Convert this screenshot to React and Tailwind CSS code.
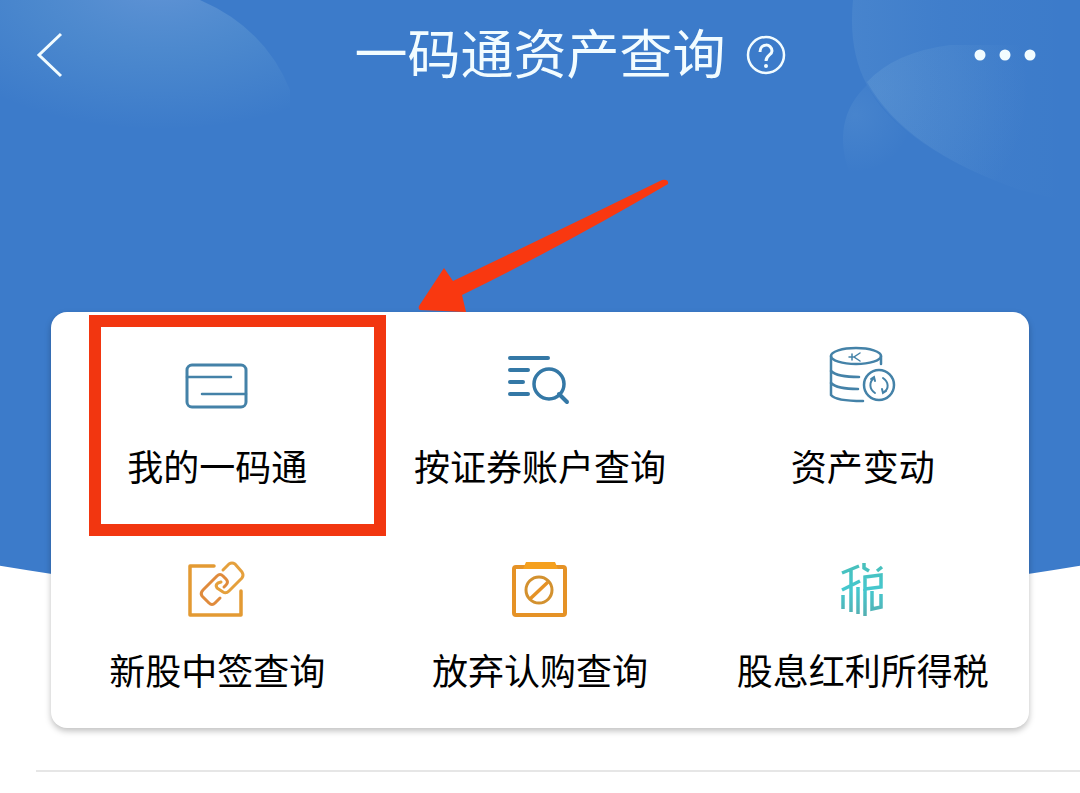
const BLUE = "#3478a6";

function CardIcon() {
  return (
    <svg viewBox="0 0 80 80" className="w-20 h-20" fill="none" stroke="#4482a8" strokeWidth="3" aria-hidden="true">
      <rect x="10" y="20" width="59" height="42" rx="5" />
      <path d="M10 32H54M25 49H69" strokeLinecap="round" strokeWidth="2.5" />
    </svg>
  );
}

function ListSearchIcon() {
  return (
    <svg viewBox="0 0 80 80" className="w-20 h-20" fill="none" stroke={BLUE} strokeWidth="4" aria-hidden="true">
      <path d="M10 13H48M10 25H28M10 37H23M10 49H28" strokeLinecap="round" />
      <circle cx="49" cy="39" r="15" strokeWidth="3.5" />
      <path d="M59 49L67 57" strokeLinecap="round" />
    </svg>
  );
}

function CoinsIcon() {
  return (
    <svg viewBox="0 0 80 80" className="w-20 h-20" fill="none" stroke="#4482a8" strokeWidth="2.5" strokeLinecap="round" aria-hidden="true">
      <ellipse cx="33" cy="11" rx="25" ry="8" />
      <path d="M8 11V50C11 54 24 56 40 56M58 11V19" />
      <path d="M8 26C12 30 22 32 36 32M8 38C12 42 22 44 35 44" />
      <path d="M26 12H32M29 9V15M37 8L31 12L37 16" strokeWidth="1.5" />
      <circle cx="56" cy="40" r="15" />
      <path d="M51 33C46 37 46 44 52 48M60 33C66 37 66 44 61 47" strokeWidth="2" />
      <path d="M48 34L51 32L52 36M63 46L60 48L59 44" strokeWidth="2" />
    </svg>
  );
}

function LinkIcon() {
  return (
    <svg viewBox="0 0 80 80" className="w-20 h-20" fill="none" strokeWidth="3.5" strokeLinecap="round" strokeLinejoin="round" aria-hidden="true">
      <path d="M37 17H13V66H64V42" stroke="#e39a33" />
      <g strokeWidth="3">
        <path d="M46 21L52 15Q55 13 58 15L65 23Q67 26 65 29L52 42Q49 45 46 43L40 39Q38 36 41 34L44 33" stroke="#e5a03c" />
        <path d="M43 49L38 54Q35 57 32 54L25 47Q23 44 26 41L40 27Q43 24 46 27L49 30Q52 33 49 36L47 38" stroke="#e08b3c" />
      </g>
    </svg>
  );
}

function ForbidIcon() {
  return (
    <svg viewBox="0 0 80 80" className="w-20 h-20" fill="none" stroke="#e59226" strokeWidth="4" aria-hidden="true">
      <rect x="14" y="18" width="51" height="48" rx="2" />
      <path d="M26 13H55L58 20H23Z" fill="#f5a01e" stroke="none" />
      <circle cx="39" cy="41" r="13" strokeWidth="3" stroke="#d3912f" />
      <path d="M30 50L48 33" strokeWidth="3.5" />
    </svg>
  );
}

function TaxIcon() {
  return (
    <svg viewBox="0 0 80 80" className="w-20 h-20" fill="none" stroke="url(#tax)" strokeWidth="3.5" aria-hidden="true">
      <defs>
        <linearGradient id="tax" gradientUnits="userSpaceOnUse" x1="0" y1="14" x2="0" y2="68">
          <stop offset="0" stopColor="#48bfba" />
          <stop offset="0.5" stopColor="#45c8cf" />
          <stop offset="1" stopColor="#55aeb0" />
        </linearGradient>
      </defs>
      <path d="M19 24L36 17M19 41L37 32M28 21V63" />
      <path d="M20 46V60M35 38V65M41 14V19L46 22M59 18L54 22" />
      <path d="M42 28L58 26V38L42 40Z" />
      <path d="M42 40V67M49 42V60L58 58V45" />
    </svg>
  );
}

const items = [
  { label: "我的一码通", Icon: CardIcon },
  { label: "按证券账户查询", Icon: ListSearchIcon },
  { label: "资产变动", Icon: CoinsIcon },
  { label: "新股中签查询", Icon: LinkIcon },
  { label: "放弃认购查询", Icon: ForbidIcon },
  { label: "股息红利所得税", Icon: TaxIcon },
];

// blue backdrop with a curved lower edge and soft bubbles in the corners
function Backdrop() {
  return (
    <div className="absolute inset-x-0 top-0 h-[609px] bg-[#3c7bca] [clip-path:ellipse(135%_609px_at_50%_0)]">
      <svg viewBox="0 0 300 200" className="absolute left-0 top-0 w-[300px] h-[200px]" aria-hidden="true">
        <defs>
          <radialGradient id="bubbleLeft" gradientUnits="userSpaceOnUse" cx="0" cy="0" r="1" gradientTransform="translate(160 -20) scale(260 150)">
            <stop offset="0" stopColor="#e6ebff" stopOpacity="0.22" />
            <stop offset="0.5" stopColor="#b4e1e6" stopOpacity="0.13" />
            <stop offset="1" stopColor="#b4e1e6" stopOpacity="0" />
          </radialGradient>
        </defs>
        <path d="M0 0H200Q265 28 290 90V200H0Z" fill="url(#bubbleLeft)" />
      </svg>
      <svg viewBox="0 0 260 220" className="absolute right-0 top-0 w-[260px] h-[220px]" aria-hidden="true">
        <defs>
          <linearGradient id="bubbleTop" gradientUnits="userSpaceOnUse" x1="30" y1="0" x2="250" y2="0">
            <stop offset="0" stopColor="#c8ebf0" stopOpacity="0.08" />
            <stop offset="0.4" stopColor="#c8ebf0" stopOpacity="0.03" />
            <stop offset="1" stopColor="#c8ebf0" stopOpacity="0" />
          </linearGradient>
          <radialGradient id="bubbleMid" gradientUnits="userSpaceOnUse" cx="60" cy="90" r="150">
            <stop offset="0" stopColor="#c8ebf0" stopOpacity="0.1" />
            <stop offset="0.5" stopColor="#c8ebf0" stopOpacity="0.06" />
            <stop offset="1" stopColor="#c8ebf0" stopOpacity="0" />
          </radialGradient>
          <radialGradient id="bubbleLow" gradientUnits="userSpaceOnUse" cx="35" cy="115" r="58">
            <stop offset="0" stopColor="#c8ebf0" stopOpacity="0.08" />
            <stop offset="1" stopColor="#c8ebf0" stopOpacity="0" />
          </radialGradient>
        </defs>
        <path d="M33 0Q28 50 47 85Q85 150 200 190L260 205V0Z" fill="url(#bubbleTop)" />
        <path d="M47 82Q75 52 130 45L260 45V205L200 190Q85 150 47 82Z" fill="url(#bubbleMid)" />
        <path d="M47 85Q10 120 30 175H100V142Q62 115 47 85Z" fill="url(#bubbleLow)" />
      </svg>
    </div>
  );
}

export default function App() {
  return (
    <div className="relative min-h-screen overflow-hidden bg-white font-['Noto_Sans_CJK_SC',sans-serif]">
      <Backdrop />

      <header className="relative grid grid-cols-[1fr_auto_1fr] items-center h-[110px] pl-9 pr-11 text-[#f2fcff]">
        <button type="button" aria-label="返回" className="justify-self-start">
          <svg viewBox="0 0 28 46" className="w-7 h-[46px]" fill="none" stroke="currentColor" strokeWidth="3">
            <path d="M25 2L3 23L25 44" />
          </svg>
        </button>
        <h1 className="pl-2 pb-2 text-[53px] leading-[72px] font-normal whitespace-nowrap">一码通资产查询</h1>
        <div className="flex items-center justify-between pl-5">
          <button type="button" aria-label="帮助">
            <svg viewBox="0 0 40 40" className="w-10 h-10" fill="none" stroke="currentColor" strokeWidth="2.5">
              <circle cx="20" cy="20" r="18" />
              <path d="M14 17C14 8 26 8 26 16C26 20 20 20 20 26" strokeWidth="3" />
              <circle cx="20" cy="31" r="2" fill="currentColor" stroke="none" />
            </svg>
          </button>
          <button type="button" aria-label="更多">
            <svg viewBox="0 0 62 12" className="w-[62px] h-3" fill="currentColor">
              <circle cx="6" cy="6" r="5.5" />
              <circle cx="31" cy="6" r="5.5" />
              <circle cx="56" cy="6" r="5.5" />
            </svg>
          </button>
        </div>
      </header>

      <main className="relative mt-[202px]">
        <section className="relative mx-[51px] grid grid-cols-3 gap-y-[60px] px-[5px] pt-[33px] pb-[35px] rounded-2xl bg-white shadow-[0_3px_6px_rgba(0,0,0,0.25)]">
          {items.map(({ label, Icon }) => (
            <button key={label} type="button" className="flex flex-col items-center gap-4 text-black">
              <Icon />
              <span className="text-[36px] leading-[48px] whitespace-nowrap">{label}</span>
            </button>
          ))}

          {/* highlight for the first entry */}
          <div className="absolute left-[38px] top-[3px] w-[297px] h-[221px] border-12 border-[#f23610] pointer-events-none" />
          <svg viewBox="0 0 256 140" className="absolute left-[365px] bottom-full w-64 h-[140px] pointer-events-none" aria-hidden="true">
            <path d="M3 134L28 96L37 109Q140 60 246 8Q253 7 252 12Q150 72 46 123L50 140L4 138Q2 137 3 134Z" fill="#f93810" />
          </svg>
        </section>

        <hr className="mt-[42px] ml-9 border-t-2 border-[#e6e6e6]" />
      </main>
    </div>
  );
}
